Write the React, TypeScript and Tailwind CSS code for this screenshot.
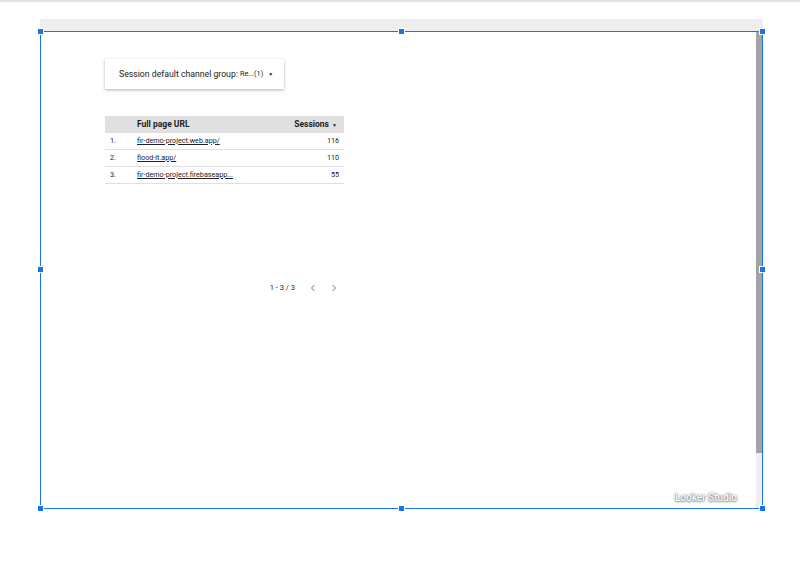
const rows = [
  { n: "1.", url: "fir-demo-project.web.app/", sessions: 116 },
  { n: "2.", url: "flood-it.app/", sessions: 110 },
  { n: "3.", url: "fir-demo-project.firebaseapp...", sessions: 55 },
];

function Handle({ className }: { className: string }) {
  return (
    <div
      className={`absolute h-[7px] w-[7px] border border-white bg-[#1a73e8] ${className}`}
    />
  );
}

export default function App() {
  return (
    <div
      className="relative h-[564px] w-[800px] overflow-hidden border-t-2 border-[#e3e3e3] bg-white"
      style={{ fontFamily: "Roboto, 'Liberation Sans', sans-serif" }}
    >
      <div className="ml-[40px] mt-[17px] w-[723px]">
        <div className="h-[12px] bg-[#eeeeee]" />
        <div className="relative flex h-[478px] border border-[#1a73e8]">
          <div className="flex-1 pl-[64px] pt-[27px]">
            {/* filter control */}
            <div className="flex h-[30px] w-[179px] items-center whitespace-nowrap pl-[14px] pt-[1px] text-[8.7px] text-[#202124] shadow-[0_1px_3px_rgba(0,0,0,0.3)]">
              <span>Session default channel group:</span>
              <span className="ml-[2px] text-[7.3px]">Re...(1)</span>
              <span className="ml-[5px] text-[5px]">▼</span>
            </div>

            {/* table */}
            <div className="mt-[27px] w-[239px] text-[7.2px] text-[#202124]">
              <div className="flex h-[17px] items-center bg-[#e0e0e0] text-[8.5px] font-bold">
                <span className="w-[32px]" />
                <span className="flex-1">Full page URL</span>
                <span className="pr-[7px]">
                  Sessions <span className="ml-[1px] text-[5px]">▼</span>
                </span>
              </div>
              {rows.map((r) => (
                <div
                  key={r.n}
                  className="flex h-[17px] items-center border-b border-[#e0e0e0]"
                >
                  <span className="w-[32px] pl-[5px]">{r.n}</span>
                  <span className="flex-1 underline">{r.url}</span>
                  <span className="pr-[5px]">{r.sessions}</span>
                </div>
              ))}
            </div>

            {/* pagination */}
            <div className="mt-[98px] flex w-[239px] items-center justify-end text-[7.5px] text-[#202124]">
              <span>1 - 3 / 3</span>
              <svg className="ml-[13px]" width="10" height="10" viewBox="0 0 10 10">
                <path d="M6.5 2 L3.5 5 L6.5 8" fill="none" stroke="#757575" strokeWidth="1" />
              </svg>
              <svg className="ml-[11px] mr-[5px]" width="10" height="10" viewBox="0 0 10 10">
                <path d="M3.5 2 L6.5 5 L3.5 8" fill="none" stroke="#757575" strokeWidth="1" />
              </svg>
            </div>
          </div>

          {/* scrollbar */}
          <div className="flex w-[6px] flex-col bg-[#eeeeee]">
            <div className="h-[421px] bg-[#a4a4a4]" />
          </div>

          <div
            className="absolute bottom-[3px] right-[25px] text-[10px] font-medium text-white"
            style={{ textShadow: "0 0 1px #777, 0 1px 2px #888, 0 0 3px #aaa" }}
          >
            Looker Studio
          </div>

          <Handle className="-left-[4px] -top-[4px]" />
          <Handle className="left-[357px] -top-[4px]" />
          <Handle className="-right-[4px] -top-[4px]" />
          <Handle className="-left-[4px] top-[234px]" />
          <Handle className="-right-[4px] top-[234px]" />
          <Handle className="-left-[4px] -bottom-[4px]" />
          <Handle className="left-[357px] -bottom-[4px]" />
          <Handle className="-right-[4px] -bottom-[4px]" />
        </div>
      </div>
    </div>
  );
}
